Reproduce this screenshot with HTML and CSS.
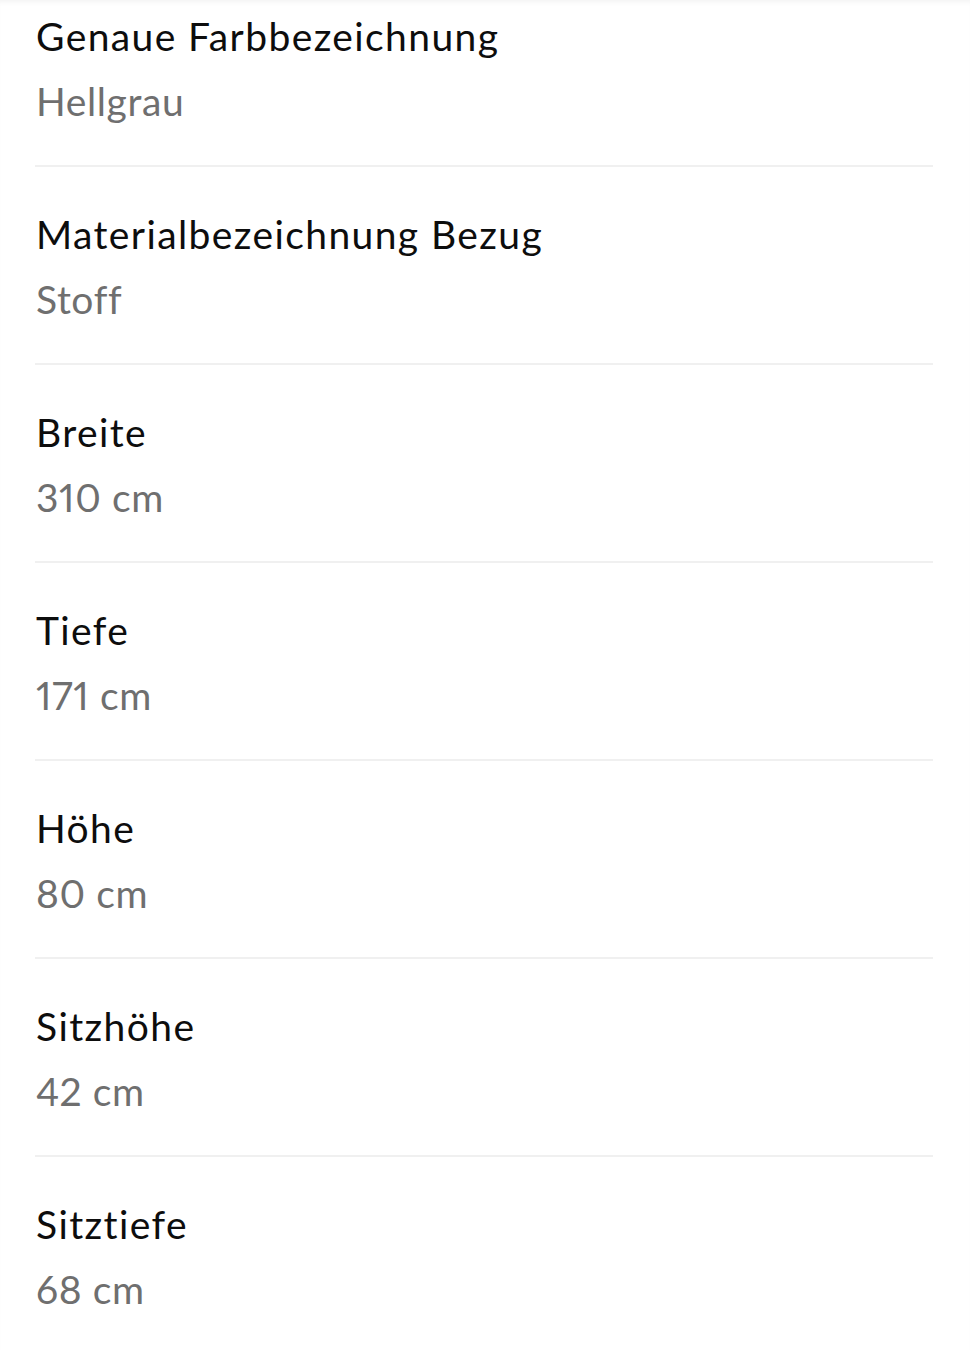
FILE: index.html
```html
<!DOCTYPE html>
<html lang="de">
<head>
  <meta charset="UTF-8" />
  <meta name="viewport" content="width=device-width, initial-scale=1.0"/>
  <title>Produktdetails</title>
  <link rel="stylesheet" href="styles.css">
</head>
<body>

  <div class="page">
    <dl class="spec-list">
      <div class="spec-row">
        <dt>Genaue Farbbezeichnung</dt>
        <dd>Hellgrau</dd>
      </div>
      <div class="spec-row">
        <dt>Materialbezeichnung Bezug</dt>
        <dd>Stoff</dd>
      </div>
      <div class="spec-row">
        <dt>Breite</dt>
        <dd>310 cm</dd>
      </div>
      <div class="spec-row">
        <dt>Tiefe</dt>
        <dd>171 cm</dd>
      </div>
      <div class="spec-row">
        <dt>Höhe</dt>
        <dd>80 cm</dd>
      </div>
      <div class="spec-row">
        <dt>Sitzhöhe</dt>
        <dd>42 cm</dd>
      </div>
      <div class="spec-row">
        <dt>Sitztiefe</dt>
        <dd>68 cm</dd>
      </div>
    </dl>
  </div>

</body>
</html>
```

FILE: styles.css
```css
body {
  font-family: Lato, "Open Sans", sans-serif;
  margin: 0;
  padding: 0;
  background-color: #fff;
  color: #111;
}

.page {
  min-height: 1350px;
  padding: 0 37px 0 35px;
  box-shadow: inset 0 5px 5px -3px rgba(0, 0, 0, 0.05);
}

.spec-list {
  margin: 0;
}

.spec-row {
  padding: 44px 1px 41px;
  border-bottom: 2px solid #f0f0f0;
}

.spec-row:first-child {
  padding-top: 13px;
}

.spec-row:last-child {
  border-bottom: none;
}

.spec-row dt {
  font-size: 39px;
  line-height: 46px;
  letter-spacing: 1.4px;
  color: #0d0d0d;
}

.spec-row dd {
  margin: 19px 0 0;
  font-size: 39px;
  line-height: 46px;
  letter-spacing: 0.6px;
  font-variant-numeric: proportional-nums;
  color: #6f6f6f;
}
```
